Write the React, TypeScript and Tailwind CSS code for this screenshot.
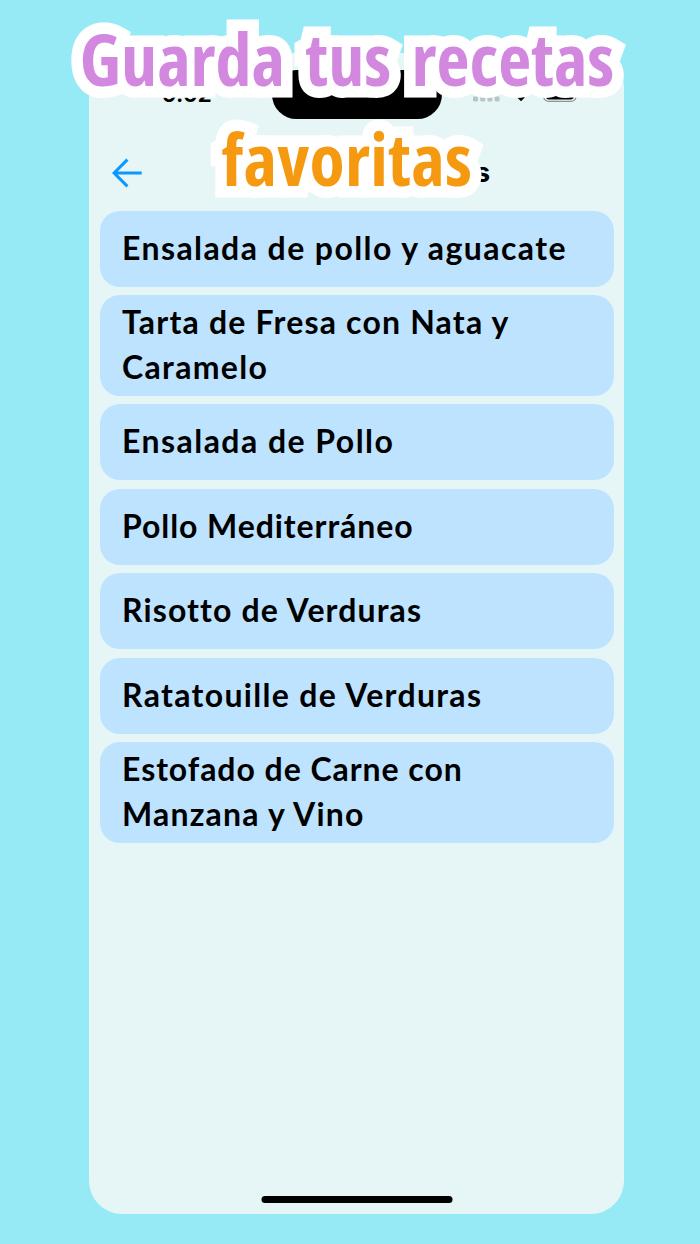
const recipes = [
  { lines: [{ text: 'Ensalada de pollo y aguacate', cls: 'tracking-[1.42px]' }] },
  {
    lines: [
      { text: 'Tarta de Fresa con Nata y', cls: 'tracking-[1.19px]' },
      { text: 'Caramelo', cls: 'tracking-[1.33px]' },
    ],
  },
  { lines: [{ text: 'Ensalada de Pollo', cls: 'tracking-[1.46px]' }] },
  { lines: [{ text: 'Pollo Mediterráneo', cls: 'tracking-[0.92px]' }] },
  { lines: [{ text: 'Risotto de Verduras', cls: 'tracking-[1.12px]' }] },
  { lines: [{ text: 'Ratatouille de Verduras', cls: 'tracking-[1.33px]' }] },
  {
    lines: [
      { text: 'Estofado de Carne con', cls: 'tracking-[0.95px]' },
      { text: 'Manzana y Vino', cls: 'tracking-[1.2px]' },
    ],
  },
];

function StatusBar() {
  return (
    <div className="flex h-[66px] items-end pt-[17px]">
      <span className="mb-[11.5px] ml-[73px] w-[109.5px] shrink-0 font-['Inter',sans-serif] text-[23px] leading-[28px] font-semibold tracking-[-0.6px]">
        9:02
      </span>
      <div className="h-[49.5px] w-[170px] shrink-0 rounded-[25px] bg-black" />
      <div className="mb-[17px] ml-[31px] flex w-[151px] items-end">
        <svg width="28" height="6" viewBox="0 0 28 6" className="shrink-0 fill-[#b9c4c5]">
          <rect x="0" y="0.6" width="5" height="4.8" rx="1.3" />
          <rect x="7.2" y="0.6" width="5" height="4.8" rx="1.3" />
          <rect x="14.4" y="0.6" width="5" height="4.8" rx="1.3" />
          <rect x="21.6" y="0.6" width="5" height="4.8" rx="1.3" />
        </svg>
        <svg width="24" height="18" viewBox="0 0 24 18" className="ml-[8px] shrink-0">
          <path d="M12 17.3 8.2 13.5Q12 10.5 15.8 13.5Z" fill="#000" />
          <path d="M5 10.5Q12 4.5 19 10.5M1.5 6.5Q12 -2.5 22.5 6.5" fill="none" stroke="#000" strokeWidth="3" />
        </svg>
        <svg width="38" height="18" viewBox="0 0 38 18" className="ml-[10px] shrink-0">
          <rect x="0.6" y="0.6" width="32.4" height="16.8" rx="5" fill="none" stroke="#8b9293" strokeWidth="1.1" />
          <rect x="2.6" y="2.6" width="28.4" height="12.8" rx="3.6" fill="#000" />
        </svg>
      </div>
    </div>
  );
}

export default function App() {
  return (
    <div className="relative flex h-[1244px] w-[700px] flex-col overflow-hidden bg-[#95eaf5] text-black">
      <main className="mt-[53px] ml-[89px] flex h-[1161px] w-[535px] flex-col rounded-[33px] bg-[#e6f5f6]">
        <StatusBar />
        <header className="flex h-[92px] items-center pt-[15px]">
          <svg width="30" height="30" viewBox="0 0 30 30" className="ml-[23px] shrink-0">
            <path d="M15.4 1.6 2.1 15l13.3 13.4M2.1 15H29.7" fill="none" stroke="#0a98ff" strokeWidth="3" />
          </svg>
          <h2 className="ml-[82px] font-['Inter',sans-serif] text-[27px] leading-9 font-bold tracking-[2.28px] whitespace-nowrap">
            Recetas favoritas
          </h2>
        </header>
        <ul className="flex flex-col gap-[8.4px] pr-[10.5px] pl-[11px]">
          {recipes.map((r) => (
            <li
              key={r.lines[0].text}
              className="flex min-h-[76px] flex-col justify-center rounded-[20px] bg-[#bee3ff] px-[22px] pt-[5px] pb-[6px] font-['Lato',sans-serif] text-[32px] leading-[44.8px] font-bold"
            >
              {r.lines.map((l) => (
                <span key={l.text} className={`block whitespace-nowrap ${l.cls}`}>
                  {l.text}
                </span>
              ))}
            </li>
          ))}
        </ul>
        <div className="mx-auto mt-auto mb-[11px] h-[7px] w-[191px] translate-x-[0.5px] rounded-full bg-black" />
      </main>
      <h1 className="absolute top-[8px] left-0 w-[694px] text-center font-['Open_Sans',sans-serif] text-[72px] leading-[100px] font-bold whitespace-nowrap [font-stretch:75%] [paint-order:stroke_fill] [-webkit-text-stroke:23px_white]">
        <span className="block text-[#d288df] [word-spacing:7.5px]">Guarda tus recetas</span>
        <span className="block tracking-[0.3px] text-[#f59a10]">favoritas</span>
      </h1>
    </div>
  );
}
